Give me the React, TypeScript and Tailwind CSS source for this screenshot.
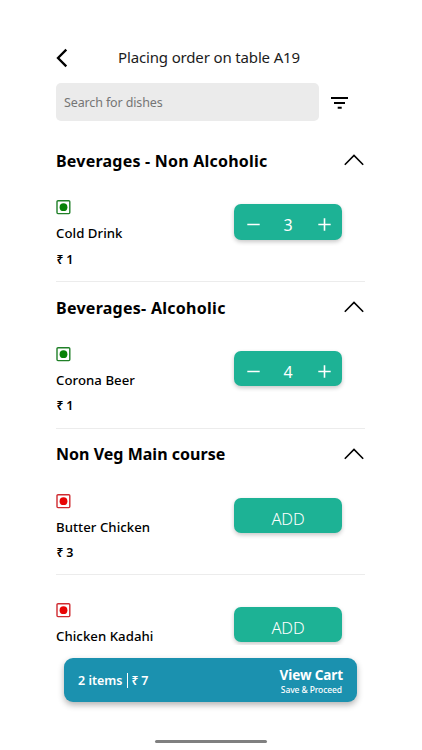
import React, { useState } from 'react';

type Dish = {
  id: number;
  name: string;
  price: number;
  veg: boolean;
  qty: number;
};

type Category = {
  title: string;
  titleClass: string;
  dishes: Dish[];
};

const initialMenu: Category[] = [
  {
    title: 'Beverages - Non Alcoholic',
    titleClass: 'tracking-[0.22px]',
    dishes: [{ id: 1, name: 'Cold Drink', price: 1, veg: true, qty: 3 }],
  },
  {
    title: 'Beverages- Alcoholic',
    titleClass: 'tracking-[0.27px]',
    dishes: [{ id: 2, name: 'Corona Beer', price: 1, veg: true, qty: 4 }],
  },
  {
    title: 'Non Veg Main course',
    titleClass: 'tracking-[0.02px]',
    dishes: [
      { id: 3, name: 'Butter Chicken', price: 3, veg: false, qty: 0 },
      { id: 4, name: 'Chicken Kadahi', price: 3, veg: false, qty: 0 },
    ],
  },
];

const FoodMark = ({ veg }: { veg: boolean }) => (
  <svg width="15" height="15" viewBox="0 0 15 15" fill="none" className="block">
    <rect x="1" y="0.8" width="12.8" height="12.8" rx="1" stroke={veg ? '#208028' : '#cf2a30'} strokeWidth="1.4" />
    <circle cx="7.5" cy="7.2" r="3.9" fill={veg ? '#078207' : '#e80505'} />
  </svg>
);

const QuantityButton = ({ qty, onChange }: { qty: number; onChange: (qty: number) => void }) => {
  const box = 'mt-[31.5px] h-[35.5px] w-[108px] shrink-0 rounded-[7px] bg-[#1db295] text-white shadow-[0_2px_4px_rgba(0,0,0,0.22)]';
  if (qty === 0) {
    return (
      <button className={`${box} pt-[7px] text-center text-[16.5px] leading-[28px] font-light tracking-[-0.1px]`} onClick={() => onChange(1)}>
        ADD
      </button>
    );
  }
  return (
    <div className={`${box} flex items-center justify-between pr-[11px] pl-[13px]`}>
      <button onClick={() => onChange(qty - 1)} aria-label="Remove one">
        <svg width="13" height="13" viewBox="0 0 13 13" className="mt-[5px] block">
          <path d="M0.3 6.5h12.4" stroke="#fff" strokeWidth="1.5" />
        </svg>
      </button>
      <span className="mr-[2px] pt-[7px] text-base leading-[28px]">{qty}</span>
      <button onClick={() => onChange(qty + 1)} aria-label="Add one">
        <svg width="13" height="13" viewBox="0 0 13 13" className="mt-[5px] block">
          <path d="M0.3 6.5h12.4M6.5 0.3v12.4" stroke="#fff" strokeWidth="1.6" />
        </svg>
      </button>
    </div>
  );
};

const App = () => {
  const [menu, setMenu] = useState<Category[]>(initialMenu);
  const [closed, setClosed] = useState<string[]>([]);
  const [search, setSearch] = useState('');

  const changeQty = (id: number, qty: number) => {
    setMenu(menu.map((cat) => ({
      ...cat,
      dishes: cat.dishes.map((d) => (d.id === id ? { ...d, qty } : d)),
    })));
  };

  const toggle = (title: string) => {
    setClosed(closed.includes(title) ? closed.filter((t) => t !== title) : [...closed, title]);
  };

  const ordered = menu.flatMap((cat) => cat.dishes).filter((d) => d.qty > 0);
  const total = ordered.reduce((sum, d) => sum + d.qty * d.price, 0);

  return (
    <div className="relative h-[750px] w-[422px] overflow-hidden bg-white pr-[57px] pl-[56px] font-['Noto_Sans',sans-serif] text-black">
      {/* Header */}
      <header className="mt-[40px] flex h-[34px] items-center">
        <button aria-label="Back">
          <svg width="12" height="20" viewBox="0 0 12 20" fill="none" className="mt-px block">
            <path d="M10.3 1.6L2 10l8.3 8.4" stroke="#000" strokeWidth="2.3" />
          </svg>
        </button>
        <h1 className="ml-[50px] text-[15px] tracking-[-0.15px] whitespace-nowrap text-[#1c1c1c]">Placing order on table A19</h1>
      </header>

      <div className="mt-[9px] flex h-[38px] items-center">
        <input
          value={search}
          onChange={(e) => setSearch(e.target.value)}
          placeholder="Search for dishes"
          className="h-[38px] w-[263px] rounded-[5px] bg-[#ebebeb] px-2 text-[12.5px] tracking-[-0.13px] outline-none placeholder:text-[#757575]"
        />
        <button className="ml-[12px]" aria-label="Filter">
          <svg width="17" height="12" viewBox="0 0 17 12" className="mt-px block">
            <path d="M0 1h17M3 6h11M6.7 10.8h4" stroke="#000" strokeWidth="1.9" />
          </svg>
        </button>
      </div>

      {/* Menu */}
      <main className="mt-[14px]">
        {menu.map((cat) => (
          <section key={cat.title}>
            <button className="flex h-[37.5px] w-full items-center justify-between pt-[14px]" onClick={() => toggle(cat.title)}>
              <h2 className={`text-base leading-[22px] font-bold whitespace-nowrap ${cat.titleClass}`}>{cat.title}</h2>
              <svg width="20" height="12" viewBox="0 0 20 12" fill="none" className="mr-px mb-px block">
                <path d="M0.8 10.8L10 1.5l9.2 9.3" stroke="#000" strokeWidth="1.6" />
              </svg>
            </button>
            {!closed.includes(cat.title) && cat.dishes
              .filter((d) => d.name.toLowerCase().includes(search.toLowerCase()))
              .map((dish) => (
                <div key={dish.id} className="flex h-[109.25px] justify-between border-b border-[#ececec] pr-[23px]">
                  <div className="pt-[27.5px]">
                    <FoodMark veg={dish.veg} />
                    <p className="mt-[8px] text-[13.2px] leading-5 font-medium tracking-[0.05px] whitespace-nowrap">{dish.name}</p>
                    <p className="mt-[6.5px] pl-[0.5px] text-[12.5px] leading-5 font-semibold tracking-[-0.2px]">
                      <span className="text-[12px]">₹</span> {dish.price}
                    </p>
                  </div>
                  <QuantityButton qty={dish.qty} onChange={(qty) => changeQty(dish.id, qty)} />
                </div>
              ))}
          </section>
        ))}
      </main>

      {/* Cart bar */}
      <div className="absolute top-[645px] left-0 h-[105px] w-full bg-white" />
      <div className="absolute top-[658px] left-[64px] flex h-[44px] w-[293px] items-center justify-between rounded-[9px] bg-[#1b91af] px-[14px] text-white shadow-[0_3px_6px_rgba(0,0,0,0.3)]">
        <div className="flex items-center pt-[2px] text-[12.5px] font-semibold">
          <span>{ordered.length} items</span>
          <span className="mr-1 mb-[2px] ml-[4px] h-[15px] w-px bg-white" />
          <span className="tracking-[-0.2px]"><span className="text-[12px]">₹</span> {total}</span>
        </div>
        <button className="flex flex-col items-end pt-px">
          <span className="text-[13.5px] leading-[17px] font-bold tracking-[-0.1px]">View Cart</span>
          <span className="mr-px text-[8.5px] leading-[11px] font-medium tracking-[-0.1px]">Save &amp; Proceed</span>
        </button>
      </div>

      <div className="absolute top-[740px] left-[155px] h-[3px] w-[112px] rounded-full bg-[#808080]" />
    </div>
  );
};

export default App;
